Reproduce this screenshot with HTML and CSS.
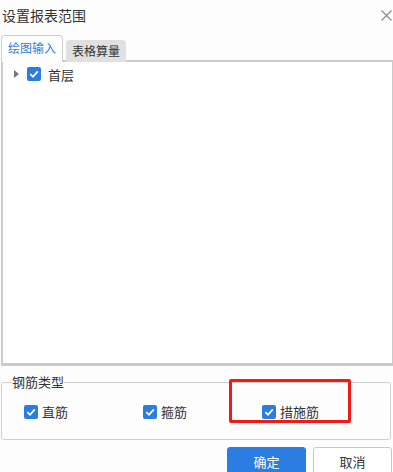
FILE: index.html
```html
<!DOCTYPE html>
<html lang="zh">
<head>
<meta charset="utf-8">
<link rel="stylesheet" href="styles.css">
</head>
<body>
<div class="dialog">
  <div class="header">
    <span class="title">设置报表范围</span>
    <svg class="close" width="11" height="11" viewBox="0 0 11 11"><path d="M0.5 0.5 L10.5 10.5 M10.5 0.5 L0.5 10.5" stroke="#8a8a8a" stroke-width="1.2" fill="none"/></svg>
  </div>
  <div class="tabs">
    <div class="tab active">绘图输入</div>
    <div class="tab">表格算量</div>
  </div>
  <div class="panel">
    <div class="tree-row">
      <svg class="caret" width="5" height="8" viewBox="0 0 5 8"><path d="M0 0 L5 4 L0 8 Z" fill="#777"/></svg>
      <span class="cb"><svg width="14" height="14" viewBox="0 0 14 14"><path d="M3.3 7.2 L6 9.8 L10.8 4.4" stroke="#fff" stroke-width="1.8" fill="none"/></svg></span>
      <span class="label">首层</span>
    </div>
  </div>
  <div class="group-wrap">
    <fieldset class="group">
      <legend>钢筋类型</legend>
      <div class="options">
        <div class="opt"><span class="cb"><svg width="14" height="14" viewBox="0 0 14 14"><path d="M3.3 7.2 L6 9.8 L10.8 4.4" stroke="#fff" stroke-width="1.8" fill="none"/></svg></span><span class="label">直筋</span></div>
        <div class="opt"><span class="cb"><svg width="14" height="14" viewBox="0 0 14 14"><path d="M3.3 7.2 L6 9.8 L10.8 4.4" stroke="#fff" stroke-width="1.8" fill="none"/></svg></span><span class="label">箍筋</span></div>
        <div class="opt"><span class="cb"><svg width="14" height="14" viewBox="0 0 14 14"><path d="M3.3 7.2 L6 9.8 L10.8 4.4" stroke="#fff" stroke-width="1.8" fill="none"/></svg></span><span class="label">措施筋</span></div>
      </div>
    </fieldset>
    <div class="highlight"></div>
  </div>
  <div class="footer">
    <button class="btn primary">确定</button>
    <button class="btn">取消</button>
  </div>
</div>
</body>
</html>
```

FILE: styles.css
```css
html, body {
  margin: 0;
  padding: 0;
  background: #fdfdfd;
}
body {
  font-family: "Noto Sans CJK SC", "Noto Sans", sans-serif;
  font-size: 13px;
  color: #333;
  width: 393px;
  height: 472px;
  overflow: hidden;
}
.dialog {
  display: flex;
  flex-direction: column;
}
.header {
  height: 31px;
  display: flex;
  align-items: center;
  justify-content: space-between;
  padding: 0 1px 0 2px;
}
.title {
  font-size: 14px;
  color: #333;
  line-height: 20px;
  margin-top: -2px;
}
.close {
  margin-top: -1px;
}
.tabs {
  display: flex;
  align-items: flex-end;
  gap: 3px;
  padding-left: 1px;
  margin-top: 4px;
  position: relative;
  z-index: 1;
  margin-bottom: -2px;
}
.tab {
  height: 22px;
  line-height: 21px;
  padding: 0 6px;
  background: #e0e0e0;
  border-radius: 4px 4px 0 0;
  color: #333;
  font-size: 12px;
}
.tab.active {
  height: 26px;
  line-height: 23px;
  background: #fff;
  border: 1px solid #cfcfcf;
  border-bottom: none;
  color: #2b7de1;
  padding: 0 6px;
}
.panel {
  margin-left: 1px;
  width: 389px;
  height: 301px;
  background: #fff;
  border: 2px solid #cacaca;
  border-bottom-width: 3px;
}
.tree-row {
  display: flex;
  align-items: center;
  height: 24px;
}
.caret {
  margin-left: 11px;
  margin-right: 8px;
}
.cb {
  width: 14px;
  height: 14px;
  background: #2b7de1;
  border-radius: 2px;
  display: inline-flex;
  flex: none;
}
.tree-row .label {
  margin-left: 7px;
  font-size: 13px;
  color: #333;
}
.group-wrap {
  position: relative;
  margin-top: 8px;
}
.group {
  margin: 0 0 0 1px;
  width: 390px;
  box-sizing: border-box;
  height: 66px;
  padding: 0 0 0 10px;
  border: 1px solid #cfcfcf;
  border-radius: 3px;
}
.group legend {
  padding: 0;
  font-size: 13px;
  color: #333;
  line-height: 16px;
}
.options {
  display: grid;
  grid-template-columns: 119px 119px 119px;
  margin-left: 12px;
  margin-top: 12px;
}
.opt {
  display: flex;
  align-items: center;
  gap: 4px;
}
.opt .label {
  font-size: 13px;
  color: #333;
}
.highlight {
  position: absolute;
  left: 229px;
  top: 5px;
  width: 116px;
  height: 38px;
  border: 3px solid #f11a14;
  border-radius: 2px;
}
.footer {
  display: flex;
  justify-content: flex-end;
  gap: 7px;
  margin-top: 7px;
  padding-right: 1px;
}
.btn {
  width: 79px;
  height: 28px;
  font-family: inherit;
  font-size: 13px;
  border-radius: 3px;
  border: 1px solid #c8c8c8;
  background: #fff;
  color: #333;
  padding: 0;
}
.btn.primary {
  background: #2b7de1;
  border-color: #2b7de1;
  color: #fff;
}
```
